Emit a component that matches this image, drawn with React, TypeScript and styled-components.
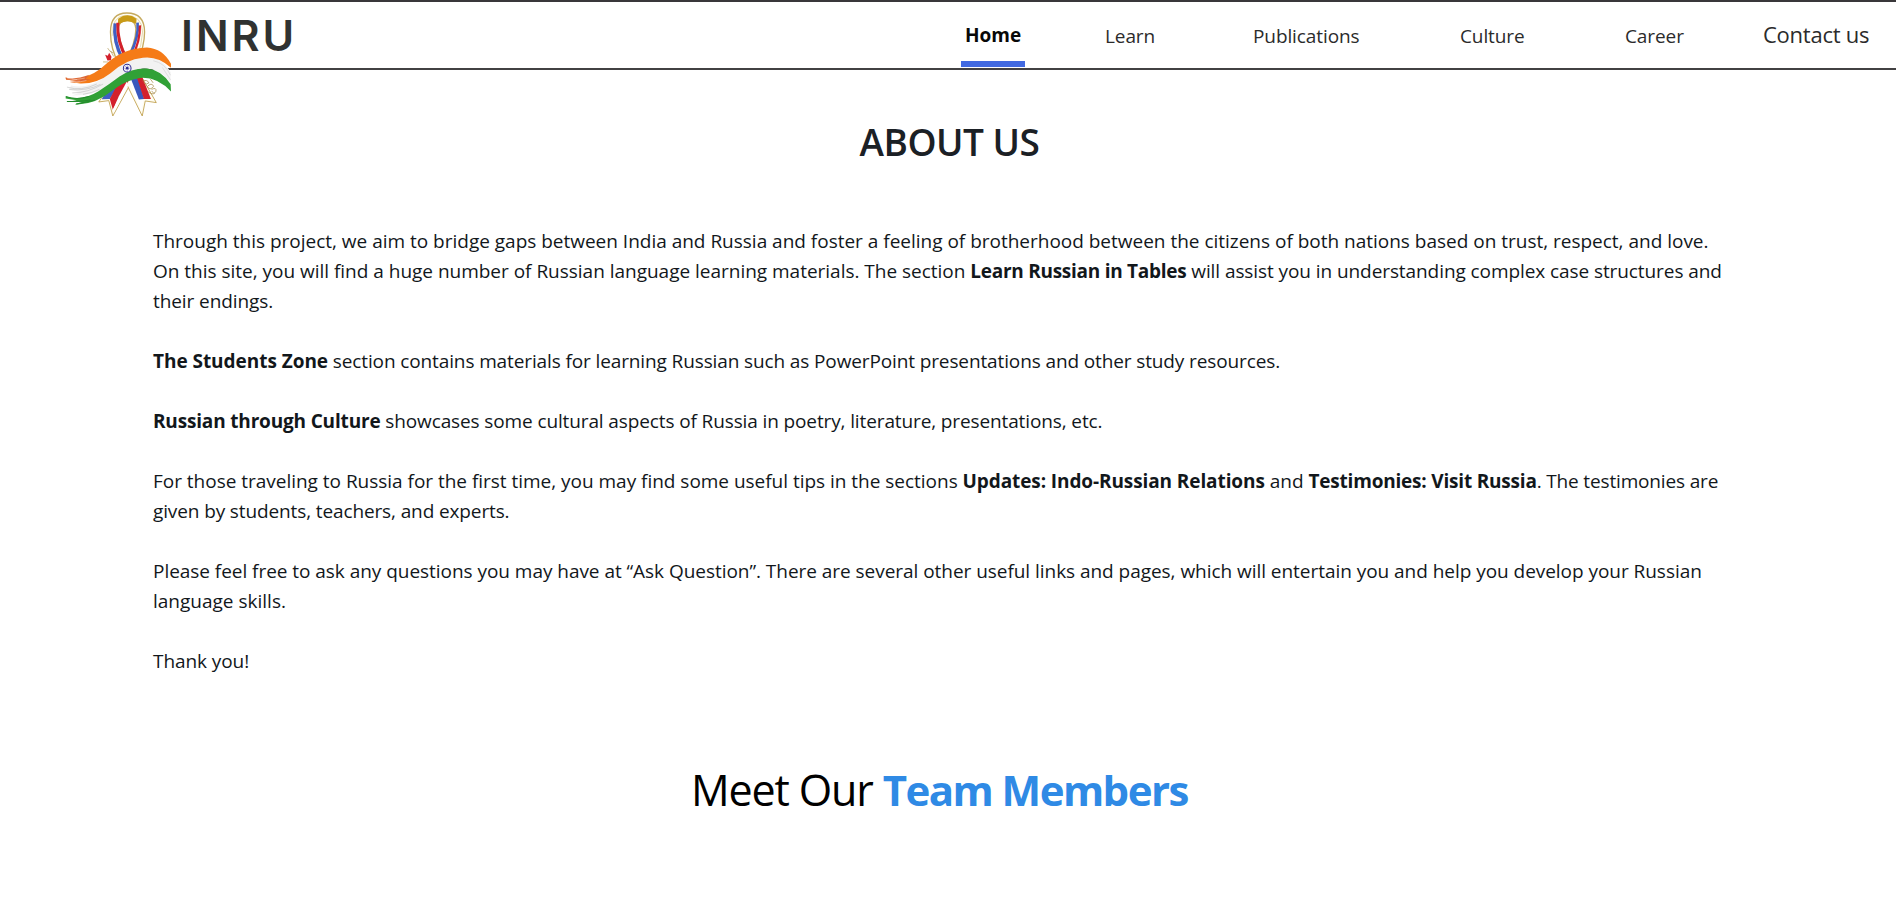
import React from "react";
import styled, { createGlobalStyle } from "styled-components";

const GlobalStyle = createGlobalStyle`
  * { box-sizing: border-box; }
  body {
    margin: 0;
    background: #fff;
    color: #12171b;
    font-family: "Open Sans", "Noto Sans", sans-serif;
    overflow: hidden;
  }
`;

const Page = styled.div`
  height: 912px;
  overflow: hidden;
`;

const Header = styled.header`
  display: flex;
  justify-content: space-between;
  align-items: flex-start;
  height: 70px;
  padding: 0 27px 0 65px;
  border-top: 2px solid #39373a;
  border-bottom: 2px solid #424143;
`;

const Brand = styled.a`
  display: flex;
  align-items: flex-start;
  padding-top: 9px;
`;

const Logo = styled.svg`
  position: relative;
  z-index: 1;
  width: 107px;
  height: 107px;
  flex: none;
`;

const BrandName = styled.span`
  margin: -2px 0 0 9px;
  font: 600 43px/52px Inter, sans-serif;
  letter-spacing: 3px;
  color: #303231;
`;

const Nav = styled.nav`
  display: flex;
  align-items: flex-start;
`;

const NavLink = styled.a<{ $gap: number; $width: number; $active?: boolean; $large?: boolean }>`
  width: ${(p) => p.$width}px;
  height: 65px;
  margin-left: ${(p) => p.$gap}px;
  padding: ${(p) => (p.$active ? "19px 0 0 4px" : p.$large ? "18px 0 0" : "20px 0 0")};
  border-bottom: ${(p) => (p.$active ? "6px solid #4169e1" : "0")};
  color: ${(p) => (p.$active ? "#080808" : "#2b2b2b")};
  font-size: ${(p) => (p.$large ? 22 : 19)}px;
  font-weight: ${(p) => (p.$active ? 700 : 400)};
  line-height: 28px;
  letter-spacing: ${(p) => (p.$active ? 0 : p.$large ? -0.25 : -0.1)}px;
  white-space: nowrap;
`;

const Title = styled.h1`
  margin: 48px 0 0;
  padding-left: 3px;
  text-align: center;
  font-size: 37px;
  font-weight: 600;
  line-height: 48px;
  letter-spacing: -0.5px;
  color: #1b2025;
`;

const About = styled.main`
  display: flex;
  flex-direction: column;
  gap: 30px;
  padding: 60px 153px 0;
`;

const Paragraph = styled.p`
  margin: 0;
  font-size: 19px;
  line-height: 30px;
  white-space: nowrap;
`;

const Run = styled.span<{ $track?: number; $bold?: boolean }>`
  letter-spacing: ${(p) => p.$track ?? 0}px;
  font-weight: ${(p) => (p.$bold ? 700 : 400)};
`;

const TeamHeading = styled.h2`
  display: flex;
  align-items: baseline;
  margin: 84px 0 0;
  padding-left: 691px;
  font-size: 43px;
  font-weight: 400;
  line-height: 60px;
  letter-spacing: -1.15px;
  white-space: pre;
  color: #000;
`;

const Accent = styled.strong`
  font-size: 42px;
  font-weight: 700;
  letter-spacing: -1.55px;
  color: #2f8ae5;
`;

type LinkSpec = { label: string; gap: number; width: number; active?: boolean; large?: boolean };

const links: LinkSpec[] = [
  { label: "Home", gap: 0, width: 64, active: true },
  { label: "Learn", gap: 80, width: 50 },
  { label: "Publications", gap: 98, width: 107 },
  { label: "Culture", gap: 100, width: 65 },
  { label: "Career", gap: 100, width: 59 },
  { label: "Contact us", gap: 79, width: 106, large: true },
];

type Piece = { text: string; track?: number; bold?: boolean };

const paragraphs: Piece[][][] = [
  [
    [{ text: "Through this project, we aim to bridge gaps between India and Russia and foster a feeling of brotherhood between the citizens of both nations based on trust, respect, and love.", track: -0.01 }],
    [
      { text: "On this site, you will find a huge number of Russian language learning materials. The section ", track: -0.015 },
      { text: "Learn Russian in Tables", bold: true, track: -0.27 },
      { text: " will assist you in understanding complex case structures and", track: -0.08 },
    ],
    [{ text: "their endings.", track: -0.08 }],
  ],
  [
    [
      { text: "The Students Zone", bold: true, track: -0.04 },
      { text: " section contains materials for learning Russian such as PowerPoint presentations and other study resources.", track: -0.12 },
    ],
  ],
  [
    [
      { text: "Russian through Culture", bold: true, track: -0.17 },
      { text: " showcases some cultural aspects of Russia in poetry, literature, presentations, etc.", track: -0.12 },
    ],
  ],
  [
    [
      { text: "For those traveling to Russia for the first time, you may find some useful tips in the sections ", track: -0.02 },
      { text: "Updates: Indo-Russian Relations", bold: true, track: -0.1 },
      { text: " and " },
      { text: "Testimonies: Visit Russia", bold: true, track: -0.2 },
      { text: ". The testimonies are", track: -0.16 },
    ],
    [{ text: "given by students, teachers, and experts.", track: -0.12 }],
  ],
  [
    [{ text: "Please feel free to ask any questions you may have at “Ask Question”. There are several other useful links and pages, which will entertain you and help you develop your Russian", track: -0.04 }],
    [{ text: "language skills." }],
  ],
  [[{ text: "Thank you!", track: -0.08 }]],
];

const RibbonLogo = () => (
  <Logo viewBox="45 35 320 320" role="img" aria-label="India and Russia ribbon">
    <g strokeLinejoin="round" strokeLinecap="round" fill="none">
      {/* ribbon tails */}
      <path d="M226 190 L146 307 L176 303 L188 349 L262 214Z" fill="#fffdf2" stroke="#bd9c45" strokeWidth="2.5" />
      <path d="M198 190 L276 349 L285 304 L318 309 L250 190Z" fill="#fffdf2" stroke="#bd9c45" strokeWidth="2.5" />
      <path d="M200 216 L155 299 L179 298 L226 226Z" fill="#3f5fc4" />
      <path d="M222 216 L179 298 L188 330 L234 246 L240 220Z" fill="#d3202c" />
      <path d="M206 290 L188 330 L191 340 L234 258 L230 246Z" fill="#fff" />
      <path d="M228 226 L273 335 L280 300 L250 226Z" fill="#fff" />
      <path d="M236 222 L266 300 L282 298 L257 216Z" fill="#3858bd" />
      <path d="M254 216 L281 298 L302 298 L272 222Z" fill="#d3202c" />
      {/* ribbon loop */}
      <path d="M206 192 Q181 150 181 98 Q181 41 230 41 Q283 41 283 98 Q283 142 260 188 L226 188 Q257 128 257 88 Q257 64 231 63 Q205 64 204 90 Q206 132 236 184Z" fill="#fffef5" stroke="#c6aa60" strokeWidth="4" />
      <path d="M188 108 Q184 52 224 48 Q276 47 277 98 Q276 138 258 174" stroke="#d6c48d" strokeWidth="2" />
      <path d="M203 76 Q230 56 258 74 L259 58 Q232 38 204 58Z" fill="#c99b17" />
      <path d="M195 72 Q188 125 218 181" stroke="#3f5fc4" strokeWidth="10" strokeLinecap="butt" />
      <path d="M203 70 Q200 128 230 178" stroke="#d3202c" strokeWidth="9" strokeLinecap="butt" />
      <path d="M262 70 Q267 112 238 169" stroke="#3f5fc4" strokeWidth="8" strokeLinecap="butt" />
      <path d="M269 78 Q270 125 247 169" stroke="#d3202c" strokeWidth="7" strokeLinecap="butt" />
      {/* ornaments beside the ribbon */}
      <path d="M165 166 L173 169 L177 160 L184 172 L182 182 L172 183Z" fill="#d3202c" />
      <path d="M173 147 Q178 158 188 160 M160 187 Q174 184 185 194 M182 155 L190 170" stroke="#b39a5a" strokeWidth="2" />
      <path d="M278 244 Q291 239 296 250 Q287 258 281 250 M291 261 Q304 247 310 260 Q302 273 293 264 M305 269 Q319 262 317 275 Q311 287 305 275 M300 238 L308 249 M294 277 Q307 287 313 281" stroke="#a88d4a" strokeWidth="2.2" />
      {/* waving tricolour */}
      <path d="M64 258 Q112 270 168 230 Q228 171 291 171 Q333 172 361 218 L360 247 Q325 204 278 207 Q234 211 191 249 Q141 289 66 288 L91 278 L56 270Z" fill="#f2f2f2" />
      <path d="M47 234 Q57 242 85 238 Q131 230 172 190 Q220 146 290 144 Q338 147 362 193 L362 205 Q323 169 278 175 Q228 179 180 222 Q141 253 91 252 L59 247 L83 245 L48 240Z" fill="#f57b17" />
      <path d="M47 234 Q74 242 118 226 L105 240 L82 239 L122 238 Q93 251 60 247 L80 244 L48 240Z" fill="#dc6734" />
      <path d="M47 290 Q95 306 144 276 Q179 253 208 231 Q246 205 290 207 Q333 211 361 254 L362 276 Q321 231 269 235 Q229 241 192 269 Q132 318 74 314 L96 307 L49 307 L80 302 L47 297Z" fill="#31a136" />
      <path d="M49 291 Q79 302 117 291 M52 306 Q91 306 120 301 M79 313 Q103 309 133 302" stroke="#238a2c" strokeWidth="3" />
      <path d="M52 263 Q94 276 139 254 M59 270 Q111 275 150 255 M68 280 Q113 280 158 254 M100 284 Q125 281 147 270" stroke="#b8b8b8" strokeWidth="1.6" />
      <path d="M62 246 L88 245 M75 250 L108 243 M53 237 L80 240 M66 242 L103 236" stroke="#ffe4d5" strokeWidth="1.3" />
      <path d="M310 184 Q344 190 360 226 M337 205 L360 240" stroke="#d4d4d4" strokeWidth="2" />
      <circle cx="231" cy="206" r="11.5" fill="#fff" stroke="#302d91" strokeWidth="3" />
      <path d="M231 196V216 M221 206H241 M224 199L238 213 M238 199L224 213" stroke="#6d6aba" strokeWidth="1.4" />
      <circle cx="231" cy="206" r="4" fill="#302d91" />
    </g>
  </Logo>
);

export default function App() {
  return (
    <Page>
      <GlobalStyle />
      <Header>
        <Brand>
          <RibbonLogo />
          <BrandName>INRU</BrandName>
        </Brand>
        <Nav>
          {links.map((l) => (
            <NavLink key={l.label} $gap={l.gap} $width={l.width} $active={l.active} $large={l.large}>
              {l.label}
            </NavLink>
          ))}
        </Nav>
      </Header>
      <Title>ABOUT US</Title>
      <About>
        {paragraphs.map((lines, i) => (
          <Paragraph key={i}>
            {lines.map((pieces, j) => (
              <React.Fragment key={j}>
                {j > 0 && <br />}
                {pieces.map((p, k) => (
                  <Run key={k} $track={p.track} $bold={p.bold}>
                    {p.text}
                  </Run>
                ))}
              </React.Fragment>
            ))}
          </Paragraph>
        ))}
      </About>
      <TeamHeading>
        {"Meet Our "}
        <Accent>Team Members</Accent>
      </TeamHeading>
    </Page>
  );
}
